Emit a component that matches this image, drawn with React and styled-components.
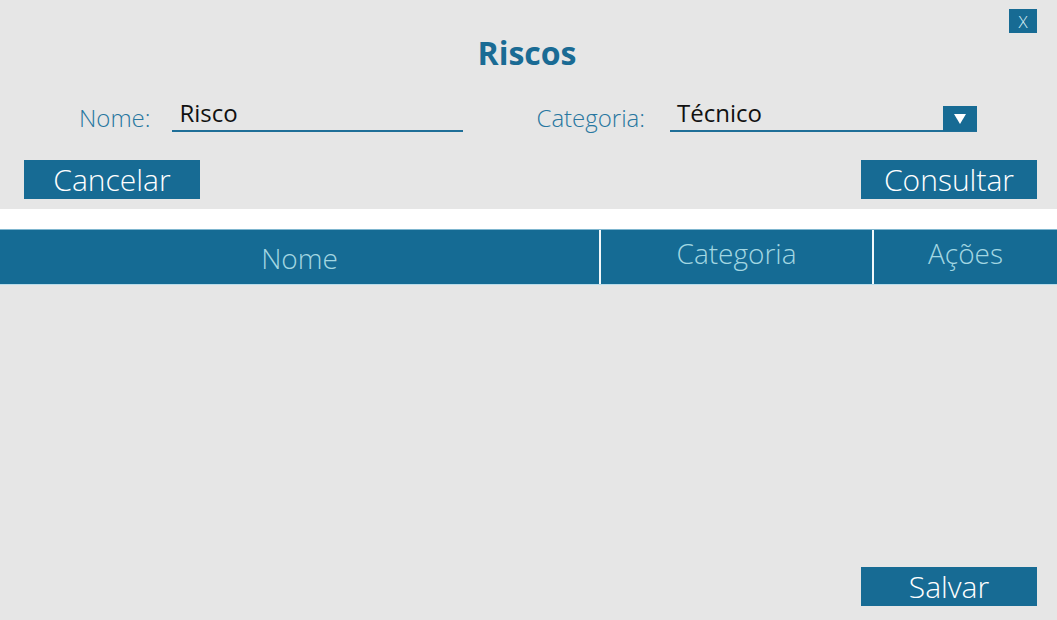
import React from "react";
import styled, { createGlobalStyle } from "styled-components";

const GlobalStyle = createGlobalStyle`
  body {
    margin: 0;
    background: #e6e6e6;
    font-family: "Open Sans", "Liberation Sans", sans-serif;
  }
`;

const App = () => {
  return (
    <>
      <GlobalStyle />
      <Page>
        <Top>
          <TitleRow>
            <span />
            <Title>Riscos</Title>
            <CloseButton>X</CloseButton>
          </TitleRow>
          <FormRow>
            <Label $after={22}>Nome:</Label>
            <Field $width={291}>
              <FieldText>Risco</FieldText>
            </Field>
            <Label $gap={73} $after={25}>Categoria:</Label>
            <Field $width={307}>
              <FieldText>Técnico</FieldText>
              <DropButton>
                <svg width="14" height="12" viewBox="0 0 14 12">
                  <path d="M1 1 L13 1 L7 11 Z" fill="#ffffff" />
                </svg>
              </DropButton>
            </Field>
          </FormRow>
          <ActionRow>
            <Button>Cancelar</Button>
            <Button>Consultar</Button>
          </ActionRow>
        </Top>
        <Band />
        <TableHead>
          <HeadCell $width={599} $offset={2}>Nome</HeadCell>
          <HeadCell $width={271}>Categoria</HeadCell>
          <HeadCell $last>Ações</HeadCell>
        </TableHead>
        <Body />
        <Footer>
          <Button>Salvar</Button>
        </Footer>
      </Page>
    </>
  );
};

export default App;

const Page = styled.div`
  width: 1057px;
  height: 620px;
  display: flex;
  flex-direction: column;
  background: #e6e6e6;
  overflow: hidden;
`;

const Top = styled.div`
  display: flex;
  flex-direction: column;
  padding: 9px 20px 10px 24px;
`;

const TitleRow = styled.div`
  display: grid;
  grid-template-columns: 1fr auto 1fr;
  align-items: start;
  height: 78px;
`;

const Title = styled.h1`
  margin: 24px 7px 0 0;
  font-size: 32px;
  font-weight: 700;
  line-height: 40px;
  color: #1a6b94;
`;

const CloseButton = styled.div`
  justify-self: end;
  width: 28px;
  height: 24px;
  display: flex;
  align-items: center;
  justify-content: center;
  background: #176b94;
  color: #d8eef5;
  font-size: 17px;
  font-weight: 300;
`;

const FormRow = styled.div`
  display: flex;
  align-items: flex-end;
  padding-left: 55px;
  height: 45px;
`;

const Label = styled.div`
  margin-left: ${(p) => (p.$gap ? p.$gap + "px" : "0")};
  margin-right: ${(p) => p.$after}px;
  font-size: 24px;
  font-weight: 300;
  line-height: 30px;
  color: #2877a0;
  transform: translateY(1px);
`;

const Field = styled.div`
  width: ${(p) => p.$width}px;
  height: 28px;
  display: flex;
  align-items: flex-end;
  justify-content: space-between;
  border-bottom: 2px solid #1f6f98;
`;

const FieldText = styled.div`
  padding-left: 7px;
  font-size: 24px;
  line-height: 30px;
  color: #111111;
  transform: translateY(-2px);
`;

const DropButton = styled.div`
  width: 34px;
  height: 25px;
  margin-bottom: -1px;
  display: flex;
  align-items: center;
  justify-content: center;
  background: #176b94;
`;

const ActionRow = styled.div`
  display: flex;
  justify-content: space-between;
  margin-top: 28px;
`;

const Button = styled.div`
  width: 176px;
  height: 39px;
  display: flex;
  align-items: center;
  justify-content: center;
  background: #176b94;
  color: #ffffff;
  font-size: 30px;
  font-weight: 300;
  line-height: 39px;
`;

const Band = styled.div`
  height: 20px;
  background: #ffffff;
`;

const TableHead = styled.div`
  display: flex;
  height: 56px;
  background: #156b94;
  border-top: 1px solid #7fb6cf;
  border-bottom: 1px solid #b9dcea;
  box-sizing: border-box;
`;

const HeadCell = styled.div`
  width: ${(p) => (p.$width ? p.$width + "px" : "auto")};
  flex: ${(p) => (p.$last ? "1" : "none")};
  display: flex;
  align-items: center;
  justify-content: center;
  padding-top: ${(p) => (p.$offset ? p.$offset + "px" : "0")};
  padding-bottom: ${(p) => (p.$offset ? "0" : "8px")};
  border-right: ${(p) => (p.$last ? "none" : "2px solid #f2f8fa")};
  color: #a3d7e2;
  font-size: 28px;
  font-weight: 300;
`;

const Body = styled.div`
  flex: 1;
`;

const Footer = styled.div`
  display: flex;
  justify-content: flex-end;
  padding: 0 20px 14px 0;
`;
